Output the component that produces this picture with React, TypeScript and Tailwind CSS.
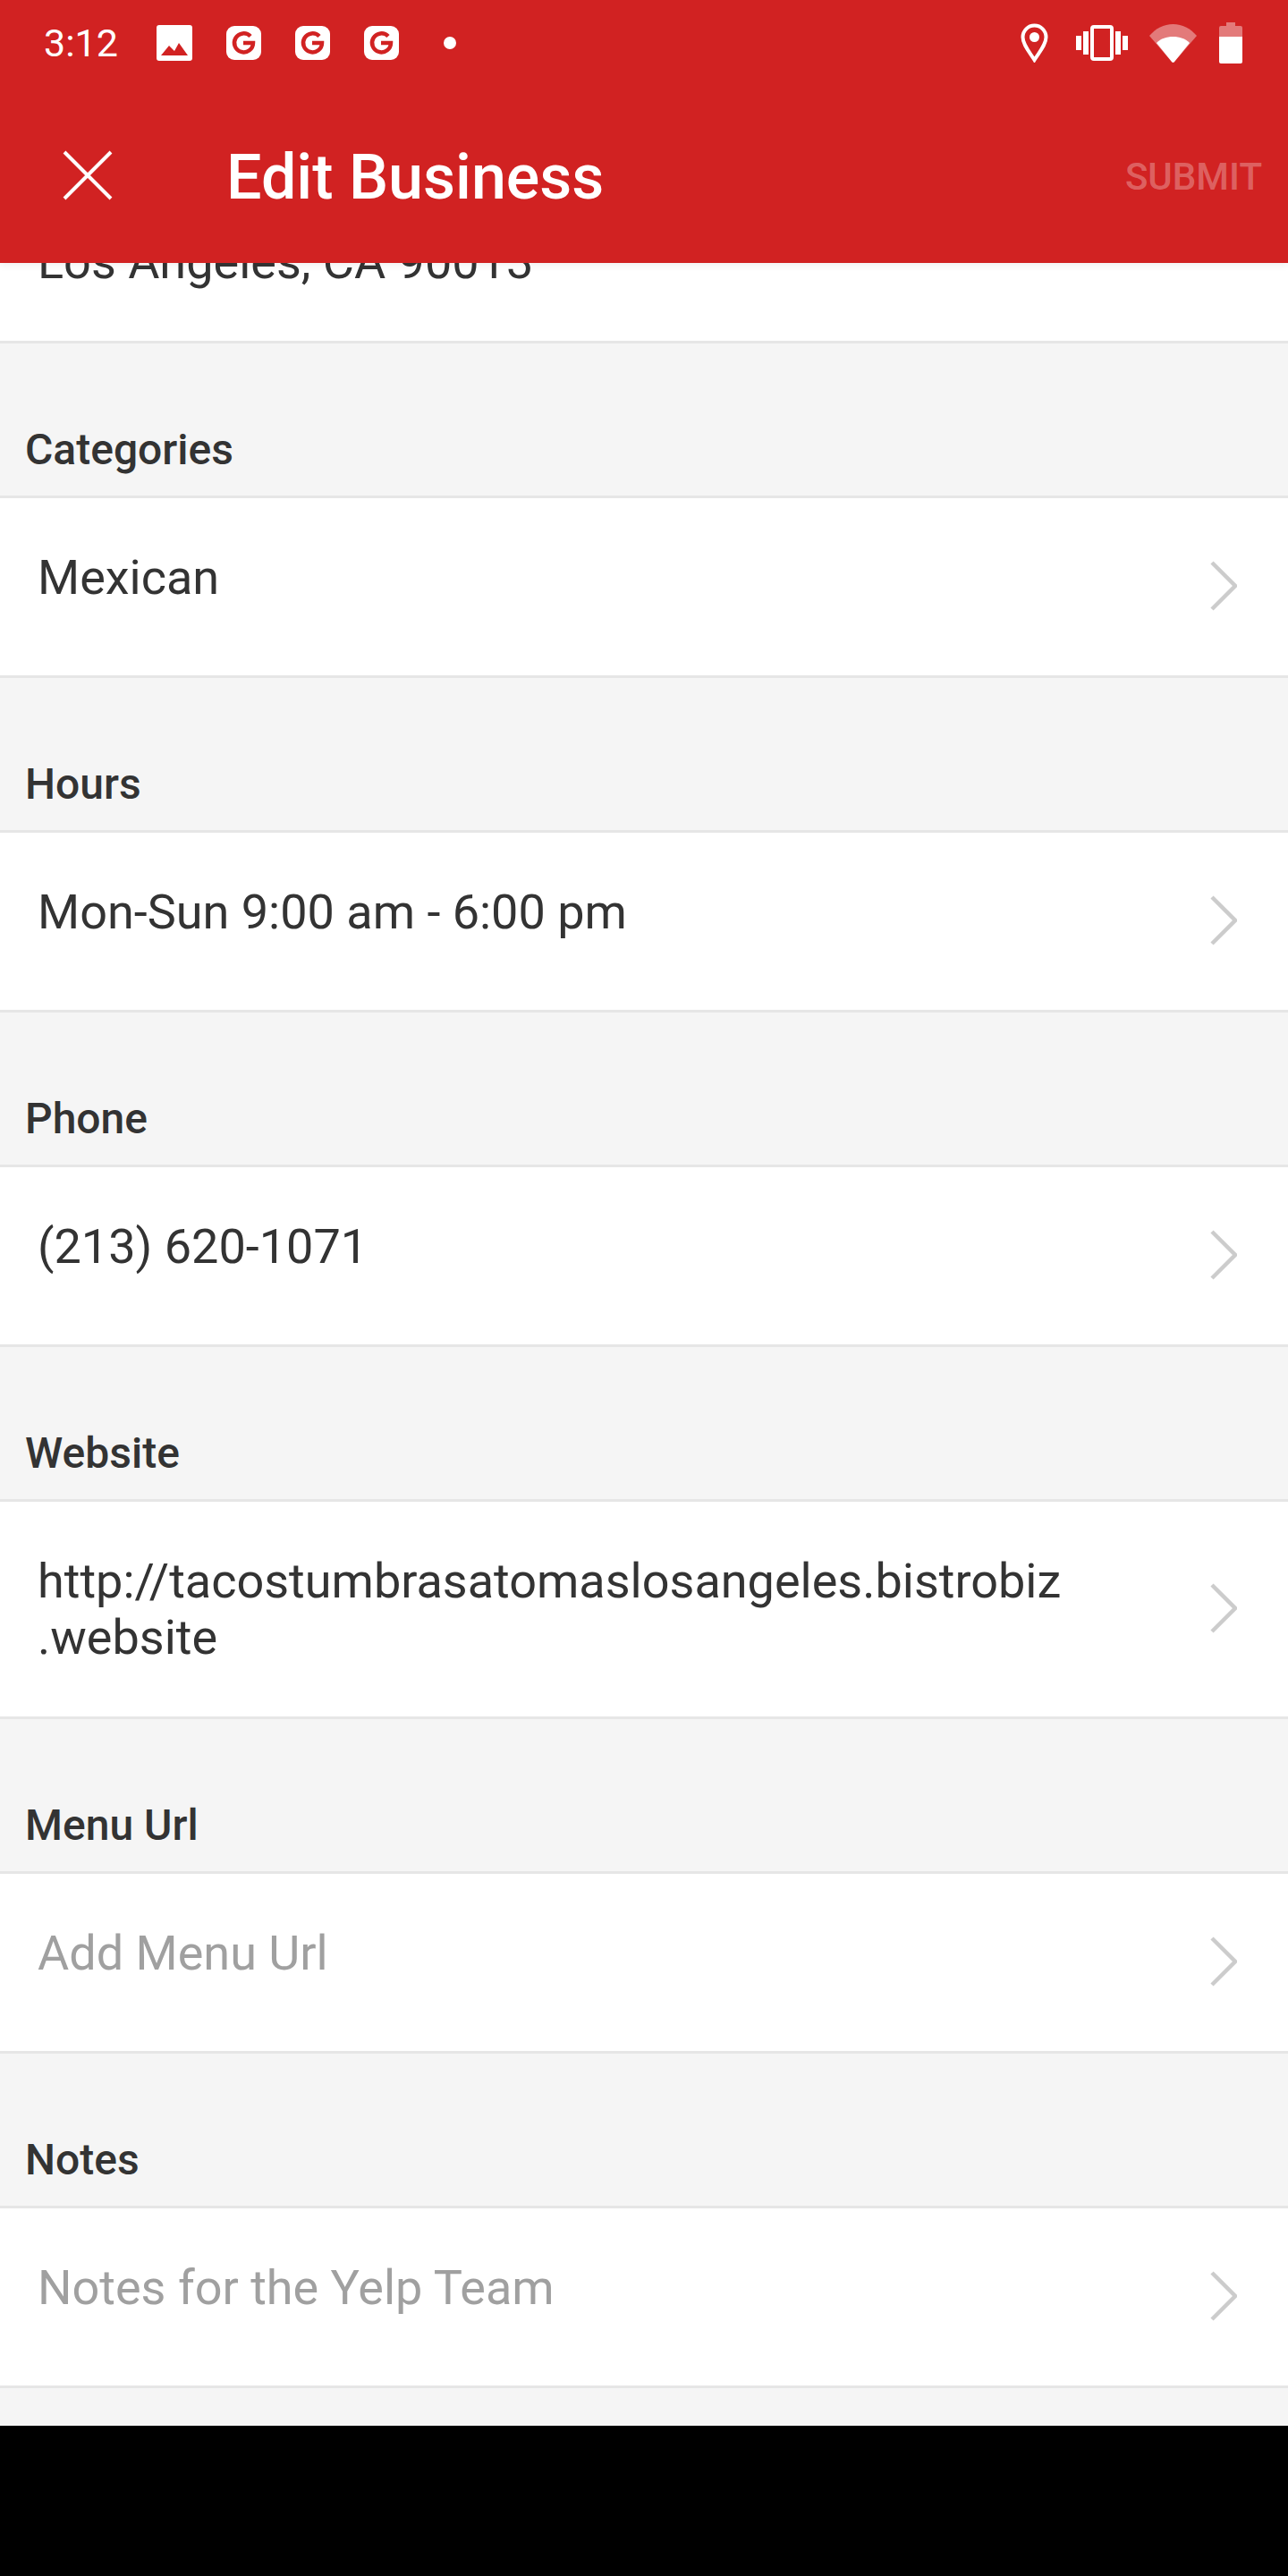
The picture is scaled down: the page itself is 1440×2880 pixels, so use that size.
import React from 'react';

const GIcon = () => (
  <svg viewBox="0 0 39 39" className="w-[39px] h-[39px]">
    <rect width="39" height="38" rx="9" fill="#fff" />
    <path d="M27 11.5a10.500 10.500 0 1 0 3 7.500H19" fill="none" stroke="#d12222" strokeWidth="4.5" />
  </svg>
);

const Chevron = () => (
  <svg viewBox="0 0 30 56" className="w-[30px] h-[56px] shrink-0 -mt-[2px]">
    <path d="M2 2l26 26L2 54" fill="none" stroke="#cccccc" strokeWidth="4.5" />
  </svg>
);

const StatusBar = () => (
  <div className="h-[96px] flex items-center justify-between pl-[49px] pr-[51px]">
    <div className="flex items-center">
      <span className="text-[43px] leading-[50px] w-[126px] text-white">3:12</span>
      <svg viewBox="0 0 40 40" className="w-[40px] h-[40px] mr-[38px]">
        <rect width="40" height="40" rx="3" fill="#fff" />
        <path d="M5 34l9-11 6 6 5-9 10 14z" fill="#d12222" />
      </svg>
      <div className="flex items-center gap-[38px]">
        <GIcon />
        <GIcon />
        <GIcon />
      </div>
      <div className="w-[14px] h-[14px] rounded-full bg-white ml-[50px]"></div>
    </div>
    <div className="flex items-center">
      <svg viewBox="0 0 31 44" className="w-[31px] h-[44px] mr-[31px]">
        <path d="M15.500 41C10 32 2.500 24 2.500 15.500a13 13 0 0 1 26 0C28.500 24 21 32 15.500 41z" fill="none" stroke="#fff" strokeWidth="4" />
        <circle cx="15.500" cy="15.500" r="5.500" fill="#fff" />
      </svg>
      <svg viewBox="0 0 58 40" className="w-[58px] h-[40px] mr-[24px]">
        <rect x="0" y="12" width="6" height="16" fill="#fff" />
        <rect x="8" y="7" width="6" height="26" fill="#fff" />
        <rect x="18" y="2" width="22" height="36" rx="2" fill="none" stroke="#fff" strokeWidth="4" />
        <rect x="44" y="7" width="6" height="26" fill="#fff" />
        <rect x="52" y="12" width="6" height="16" fill="#fff" />
      </svg>
      <svg viewBox="0 0 53 43" className="w-[53px] h-[43px] mr-[25px]">
        <path d="M0 13C7 5 16 0 26.500 0S46 5 53 13L28 42a2 2 0 0 1-3 0z" fill="#fff" fillOpacity="0.4" />
        <path d="M8 21c5-5 11-7 18.500-7S40 16 45 21L28 42a2 2 0 0 1-3 0z" fill="#fff" />
      </svg>
      <svg viewBox="0 0 26 46" className="w-[26px] h-[46px]">
        <path d="M8 0h10v4h6a2 2 0 0 1 2 2v10H0V6a2 2 0 0 1 2-2h6z" fill="#fff" fillOpacity="0.4" />
        <path d="M0 16h26v28a2 2 0 0 1-2 2H2a2 2 0 0 1-2-2z" fill="#fff" />
      </svg>
    </div>
  </div>
);

const Field = ({ label, lines, placeholder }: { label: string; lines: string[]; placeholder?: boolean }) => (
  <div>
    <div className="h-[170px] flex items-end pl-[28px] pb-[23px] text-[48px] leading-[56px] font-medium text-[#333333]">{label}</div>
    <div className="bg-white border-y-[3px] border-[#e6e6e6] py-[57px] pl-[42px] pr-[57px] flex items-center justify-between">
      <div className={`min-h-[84px] text-[54px] leading-[63px] ${placeholder ? 'text-[#a0a0a0]' : 'text-[#333333]'}`}>
        {lines.map((line) => (
          <div key={line}>{line}</div>
        ))}
      </div>
      <Chevron />
    </div>
  </div>
);

export default function App() {
  return (
    <div className="w-[1440px] h-[2880px] flex flex-col bg-black font-[Roboto,sans-serif] overflow-hidden">
      {/* Header */}
      <div className="relative z-10 h-[294px] shrink-0 bg-[#d12222] shadow-[0_3px_8px_rgba(0,0,0,0.06)]">
        <StatusBar />
        <div className="h-[198px] pt-[6px] flex items-center justify-between pl-[70px] pr-[29px]">
          <div className="flex items-center">
            <svg viewBox="0 0 56 56" className="w-[56px] h-[56px] mr-[127px] -mt-[5px]">
              <path d="M2 2l52 52M54 2L2 54" fill="none" stroke="#fff" strokeWidth="4" />
            </svg>
            <span className="text-[70px] leading-[82px] font-medium text-white">Edit Business</span>
          </div>
          <span className="text-[42px] leading-[50px] font-medium text-white/30">SUBMIT</span>
        </div>
      </div>

      {/* Form */}
      <div className="flex-1 bg-[#f5f5f5]">
        <div className="h-[90px] bg-white border-b-[3px] border-[#e6e6e6] overflow-hidden pl-[42px] text-[54px] leading-[63px] text-[#333333]">
          <div className="-mt-[33px]">Los Angeles, CA 90013</div>
        </div>
        <Field label="Categories" lines={['Mexican']} />
        <Field label="Hours" lines={['Mon-Sun 9:00 am - 6:00 pm']} />
        <Field label="Phone" lines={['(213) 620-1071']} />
        <Field label="Website" lines={['http://tacostumbrasatomaslosangeles.bistrobiz', '.website']} />
        <Field label="Menu Url" lines={['Add Menu Url']} placeholder />
        <Field label="Notes" lines={['Notes for the Yelp Team']} placeholder />
      </div>

      {/* Nav bar */}
      <div className="h-[168px] shrink-0 bg-black"></div>
    </div>
  );
}
